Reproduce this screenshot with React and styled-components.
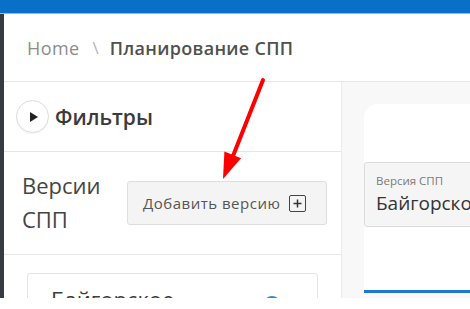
import React from 'react';
import styled, { createGlobalStyle } from 'styled-components';

const GlobalStyle = createGlobalStyle`
  html, body {
    margin: 0;
    padding: 0;
    background: #ffffff;
    overflow: hidden;
  }
  body {
    font-family: "Open Sans", "Noto Sans", Arial, sans-serif;
  }
`;

const Page = styled.div`
  position: relative;
  width: 470px;
  height: 298px;
  overflow: hidden;
  display: flex;
  flex-direction: column;
`;

const TopBar = styled.div`
  height: 13px;
  flex: none;
  background: #0a6fc9;
  border-bottom: 1px solid #8cbde9;
`;

const Body = styled.div`
  flex: 1;
  display: flex;
  min-height: 0;
`;

const SideStrip = styled.div`
  width: 4px;
  flex: none;
  background: #373a3f;
`;

const Main = styled.div`
  flex: 1;
  display: flex;
  flex-direction: column;
  min-width: 0;
`;

const Breadcrumb = styled.div`
  height: 67px;
  flex: none;
  display: flex;
  align-items: center;
  padding-left: 23px;
  border-bottom: 1px solid #e6e6e6;
  font-size: 18px;
  white-space: nowrap;
`;

const Crumb = styled.span`
  color: ${(p) => (p.$current ? '#505050' : '#8c8c8c')};
  font-weight: ${(p) => (p.$current ? 600 : 400)};
  letter-spacing: ${(p) => (p.$current ? '0.3px' : '0.4px')};
`;

const Sep = styled.span`
  color: #b5b5b5;
  margin: 0 11px 0 13px;
  font-size: 17px;
`;

const Content = styled.div`
  flex: 1;
  display: flex;
  min-height: 0;
`;

const LeftPanel = styled.div`
  width: 337px;
  flex: none;
  border-right: 1px solid #ebebeb;
  display: flex;
  flex-direction: column;
`;

const FilterRow = styled.div`
  height: 69px;
  flex: none;
  display: flex;
  align-items: center;
  gap: 6px;
  padding-left: 12px;
  border-bottom: 1px solid #e6e6e6;
`;

const ToggleCircle = styled.div`
  width: 31px;
  height: 31px;
  border-radius: 50%;
  border: 1px solid #dcdcdc;
  background: #fff;
  display: flex;
  align-items: center;
  justify-content: center;
  box-shadow: 0 1px 1px rgba(0, 0, 0, 0.04);
`;

const Triangle = styled.div`
  width: 0;
  height: 0;
  margin-left: 3px;
  border-top: 5px solid transparent;
  border-bottom: 5px solid transparent;
  border-left: 8px solid #222;
`;

const PanelTitle = styled.div`
  font-size: 21px;
  font-weight: 600;
  color: #3a3a3a;
`;

const VersionsRow = styled.div`
  height: 102px;
  flex: none;
  display: flex;
  align-items: center;
  padding-left: 18px;
  border-bottom: 1px solid #e6e6e6;
`;

const VersionsTitle = styled.div`
  width: 105px;
  font-size: 22px;
  line-height: 34px;
  color: #444;
  margin-top: -2px;
`;

const AddButton = styled.button`
  width: 200px;
  height: 44px;
  display: flex;
  align-items: center;
  gap: 9px;
  padding: 0 0 0 15px;
  background: #f4f4f4;
  border: 1px solid #dedede;
  border-radius: 3px;
  font-family: inherit;
  font-size: 15px;
  letter-spacing: 0.5px;
  color: #555;
`;

const PlusBox = styled.span`
  width: 15px;
  height: 15px;
  border: 1.5px solid #444;
  border-radius: 2px;
  display: flex;
  align-items: center;
  justify-content: center;
`;

const CardArea = styled.div`
  flex: 1;
  padding: 18px 23px 0 23px;
  overflow: hidden;
`;

const VersionCard = styled.div`
  height: 60px;
  border: 1px solid #e3e3e3;
  border-radius: 3px;
  display: flex;
  justify-content: space-between;
  padding: 10px 36px 0 23px;
`;

const CardName = styled.div`
  font-size: 22px;
  color: #3c3c3c;
  line-height: 30px;
`;

const Dot = styled.div`
  width: 18px;
  height: 18px;
  border-radius: 50%;
  background: #2b8ae0;
  margin-top: 12px;
`;

const RightPanel = styled.div`
  flex: 1;
  background: #f8f8f8;
  padding: 22px 0 0 22px;
  overflow: hidden;
`;

const FormCard = styled.div`
  width: 200px;
  height: 189px;
  background: #fff;
  border-top-left-radius: 14px;
  border-bottom: 3px solid #1c78d2;
  padding-top: 58px;
  box-sizing: border-box;
`;

const Field = styled.div`
  height: 65px;
  box-sizing: border-box;
  background: #f5f5f5;
  border: 1px solid #dcdcdc;
  border-radius: 3px;
  padding: 10px 0 0 11px;
  white-space: nowrap;
`;

const FieldLabel = styled.div`
  font-size: 11.5px;
  color: #7a7a7a;
  line-height: 16px;
`;

const FieldValue = styled.div`
  font-size: 19px;
  color: #333;
  line-height: 28px;
`;

const Annotation = styled.svg`
  position: absolute;
  left: 0;
  top: 0;
  pointer-events: none;
`;

export default function App() {
  return (
    <>
      <GlobalStyle />
      <Page>
        <TopBar />
        <Body>
          <SideStrip />
          <Main>
            <Breadcrumb>
              <Crumb>Home</Crumb>
              <Sep>\</Sep>
              <Crumb $current>Планирование СПП</Crumb>
            </Breadcrumb>
            <Content>
              <LeftPanel>
                <FilterRow>
                  <ToggleCircle>
                    <Triangle />
                  </ToggleCircle>
                  <PanelTitle>Фильтры</PanelTitle>
                </FilterRow>
                <VersionsRow>
                  <VersionsTitle>
                    Версии
                    <br />
                    СПП
                  </VersionsTitle>
                  <AddButton>
                    Добавить версию
                    <PlusBox>
                      <svg width="9" height="9" viewBox="0 0 9 9">
                        <path d="M4.5 0.5v8M0.5 4.5h8" stroke="#333" strokeWidth="1.5" />
                      </svg>
                    </PlusBox>
                  </AddButton>
                </VersionsRow>
                <CardArea>
                  <VersionCard>
                    <CardName>Байгорское</CardName>
                    <Dot />
                  </VersionCard>
                </CardArea>
              </LeftPanel>
              <RightPanel>
                <FormCard>
                  <Field>
                    <FieldLabel>Версия СПП</FieldLabel>
                    <FieldValue>Байгорское</FieldValue>
                  </Field>
                </FormCard>
              </RightPanel>
            </Content>
          </Main>
        </Body>
        <Annotation width="470" height="298" viewBox="0 0 470 298">
          <line x1="263" y1="80" x2="233" y2="156" stroke="#ff0000" strokeWidth="4" strokeLinecap="round" />
          <polygon points="223,179 224.4,151.5 241.1,158.3" fill="#ff0000" />
        </Annotation>
      </Page>
    </>
  );
}
